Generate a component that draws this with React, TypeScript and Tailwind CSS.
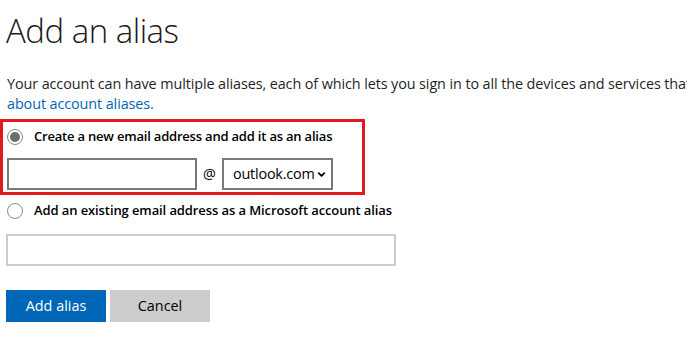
import { ChevronDown } from 'lucide-react';

const font = { fontFamily: '"Open Sans", "Liberation Sans", sans-serif' };

function Radio({ checked }: { checked?: boolean }) {
  return (
    <span className="w-4 h-4 rounded-full border border-[#8a8a8a] bg-white flex items-center justify-center shrink-0">
      {checked && <span className="w-[10px] h-[10px] rounded-full bg-[#6e6e6e]" />}
    </span>
  );
}

export default function App() {
  return (
    <div className="w-[687px] h-[364px] bg-white overflow-hidden text-[#000]" style={font}>
      <div className="pl-[6px] pt-[9px]">
        <h1 className="text-[33px] font-light leading-[44px] tracking-[-0.5px] text-[#1a1a1a]">Add an alias</h1>
      </div>

      <p className="whitespace-nowrap pl-[7px] mt-[21px] text-[14.4px] leading-[20px] tracking-[-0.1px] text-[#1f1f1f]">
        Your account can have multiple aliases, each of which lets you sign in to all the devices and services that use your Microsoft account. Learn more
        <br />
        <a className="text-[#0067b8]">about account aliases.</a>
      </p>

      {/* highlighted option */}
      <div className="mt-[5px] w-[365px] h-[76px] border-[3px] border-[#e3191f] pl-1 pt-[7px]">
        <label className="flex items-center gap-[11px] h-4">
          <Radio checked />
          <span className="whitespace-nowrap text-[13px] font-semibold tracking-[-0.2px]">Create a new email address and add it as an alias</span>
        </label>
        <div className="flex items-center mt-[13px]">
          <div className="w-[190px] h-[32px] border-2 border-[#7a7a7a] bg-white" />
          <span className="w-[25px] text-center text-[14.4px]">@</span>
          <div className="w-[111px] h-[32px] border-2 border-[#7a7a7a] flex items-center pl-[9px] pr-[4px] justify-between">
            <span className="text-[14.4px] tracking-[-0.2px]">outlook.com</span>
            <ChevronDown className="w-[11px] h-[11px]" strokeWidth={4} />
          </div>
        </div>
      </div>

      <label className="flex items-center gap-[11px] h-4 ml-[7px] mt-[8px]">
        <Radio />
        <span className="whitespace-nowrap text-[13px] font-semibold tracking-[-0.1px]">Add an existing email address as a Microsoft account alias</span>
      </label>
      <div className="ml-[6px] mt-[15px] w-[390px] h-[32px] border-2 border-[#cccccc] bg-white" />

      <div className="flex gap-1 ml-[6px] mt-[24px]">
        <button className="w-[100px] h-[32px] bg-[#0067b8] text-white text-[14.4px]">Add alias</button>
        <button className="w-[100px] h-[32px] bg-[#cccccc] text-[#000] text-[14.4px]">Cancel</button>
      </div>
    </div>
  );
}
